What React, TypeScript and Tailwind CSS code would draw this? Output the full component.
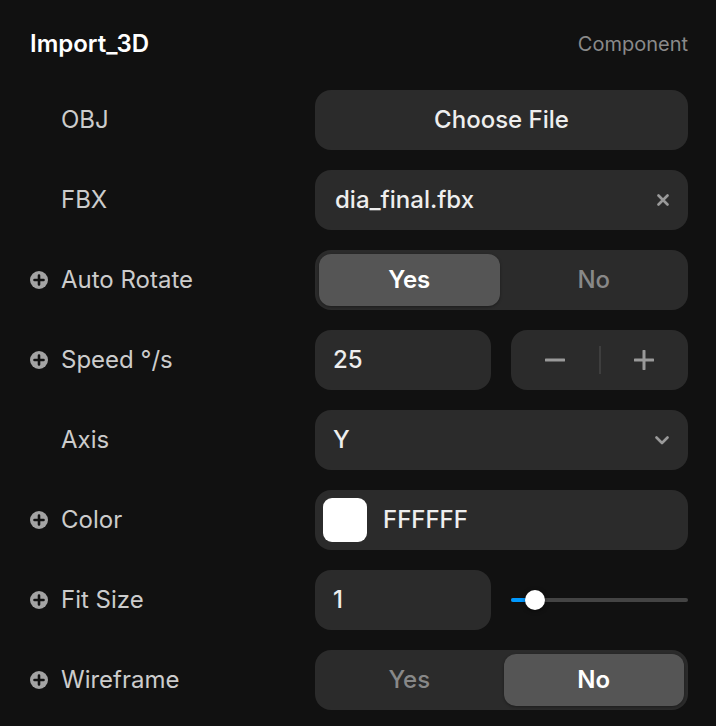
import React from "react";

function PlusBadge() {
  return (
    <svg width="18" height="18" viewBox="0 0 18 18" className="shrink-0">
      <circle cx="9" cy="9" r="9" fill="#a3a3a3" />
      <path d="M9 4.5v9M4.5 9h9" stroke="#111111" strokeWidth="2.6" strokeLinecap="round" />
    </svg>
  );
}

function Row({ label, addable, children }: { label: string; addable?: boolean; children: React.ReactNode }) {
  return (
    <div className="flex h-[60px] items-center">
      <div className="flex w-[285px] items-center gap-[13px]">
        <div className="w-[18px] h-[18px] flex items-center">{addable && <PlusBadge />}</div>
        <span className="text-[24px] text-[#cccccc]">{label}</span>
      </div>
      <div className="flex flex-1 h-full">{children}</div>
    </div>
  );
}

function Segmented({ value }: { value: "Yes" | "No" }) {
  return (
    <div className="grid grid-cols-2 gap-[4px] w-full h-full rounded-[16px] bg-[#2b2b2b] p-[4px]">
      {(["Yes", "No"] as const).map((opt) => (
        <div
          key={opt}
          className={`flex items-center justify-center rounded-[12px] text-[24px] ${
            opt === value
              ? "bg-[#555555] text-white font-semibold shadow-[0_1px_3px_rgba(0,0,0,0.35)]"
              : "text-[#888888] font-medium"
          }`}
        >
          {opt}
        </div>
      ))}
    </div>
  );
}

export default function App() {
  return (
    <div
      className="w-[716px] h-[726px] bg-[#111111] pl-[30px] pr-[28px] pt-[20px]"
      style={{ fontFamily: "Inter, 'Liberation Sans', sans-serif" }}
    >
      <div className="flex h-[48px] items-center justify-between">
        <span className="text-[24px] font-semibold text-white">Import_3D</span>
        <span className="text-[20px] text-[#8a8a8a]">Component</span>
      </div>

      <div className="mt-[22px] flex flex-col gap-[20px]">
        <Row label="OBJ">
          <div className="flex w-full items-center justify-center rounded-[16px] bg-[#2b2b2b] text-[24px] font-medium text-[#eeeeee]">
            Choose File
          </div>
        </Row>

        <Row label="FBX">
          <div className="flex w-full items-center justify-between rounded-[16px] bg-[#2b2b2b] pl-[20px] pr-[19px] text-[24px] font-medium text-[#eeeeee]">
            <span>dia_final.fbx</span>
            <svg width="12" height="12" viewBox="0 0 12 12">
              <path d="M1.5 1.5l9 9M10.5 1.5l-9 9" stroke="#9a9a9a" strokeWidth="2.6" strokeLinecap="round" />
            </svg>
          </div>
        </Row>

        <Row label="Auto Rotate" addable>
          <Segmented value="Yes" />
        </Row>

        <Row label="Speed °/s" addable>
          <div className="flex w-full gap-[20px]">
            <div className="flex w-[176px] items-center rounded-[16px] bg-[#2b2b2b] pl-[18px] text-[24px] font-medium text-[#eeeeee]">
              25
            </div>
            <div className="flex flex-1 items-center rounded-[16px] bg-[#2b2b2b]">
              <div className="flex flex-1 items-center justify-center">
                <svg width="20" height="4" viewBox="0 0 20 4">
                  <path d="M1 2h18" stroke="#9a9a9a" strokeWidth="3" strokeLinecap="round" />
                </svg>
              </div>
              <div className="w-[2px] h-[28px] bg-[#3e3e3e]" />
              <div className="flex flex-1 items-center justify-center">
                <svg width="20" height="20" viewBox="0 0 20 20">
                  <path d="M10 1v18M1 10h18" stroke="#9a9a9a" strokeWidth="3" strokeLinecap="round" />
                </svg>
              </div>
            </div>
          </div>
        </Row>

        <Row label="Axis">
          <div className="flex w-full items-center justify-between rounded-[16px] bg-[#2b2b2b] pl-[18px] pr-[19px] text-[24px] font-medium text-[#eeeeee]">
            <span>Y</span>
            <svg width="14" height="9" viewBox="0 0 14 9">
              <path d="M1.5 1.5l5.5 5.5 5.5-5.5" fill="none" stroke="#9a9a9a" strokeWidth="2.6" strokeLinecap="round" strokeLinejoin="round" />
            </svg>
          </div>
        </Row>

        <Row label="Color" addable>
          <div className="flex w-full items-center gap-[16px] rounded-[16px] bg-[#2b2b2b] pl-[8px] text-[24px] font-medium text-[#eeeeee]">
            <div className="w-[44px] h-[44px] rounded-[9px] bg-white" />
            <span>FFFFFF</span>
          </div>
        </Row>

        <Row label="Fit Size" addable>
          <div className="flex w-full gap-[20px]">
            <div className="flex w-[176px] items-center rounded-[16px] bg-[#2b2b2b] pl-[18px] text-[24px] font-medium text-[#eeeeee]">
              1
            </div>
            <div className="relative flex flex-1 items-center">
              <div className="h-[4px] w-full rounded-full bg-[#444444]">
                <div className="h-full w-[18px] rounded-full bg-[#0099ff]" />
              </div>
              <div className="absolute left-[14px] top-1/2 -translate-y-1/2 w-[20px] h-[20px] rounded-full bg-white shadow-[0_1px_4px_rgba(0,0,0,0.5)]" />
            </div>
          </div>
        </Row>

        <Row label="Wireframe" addable>
          <Segmented value="No" />
        </Row>
      </div>
    </div>
  );
}
